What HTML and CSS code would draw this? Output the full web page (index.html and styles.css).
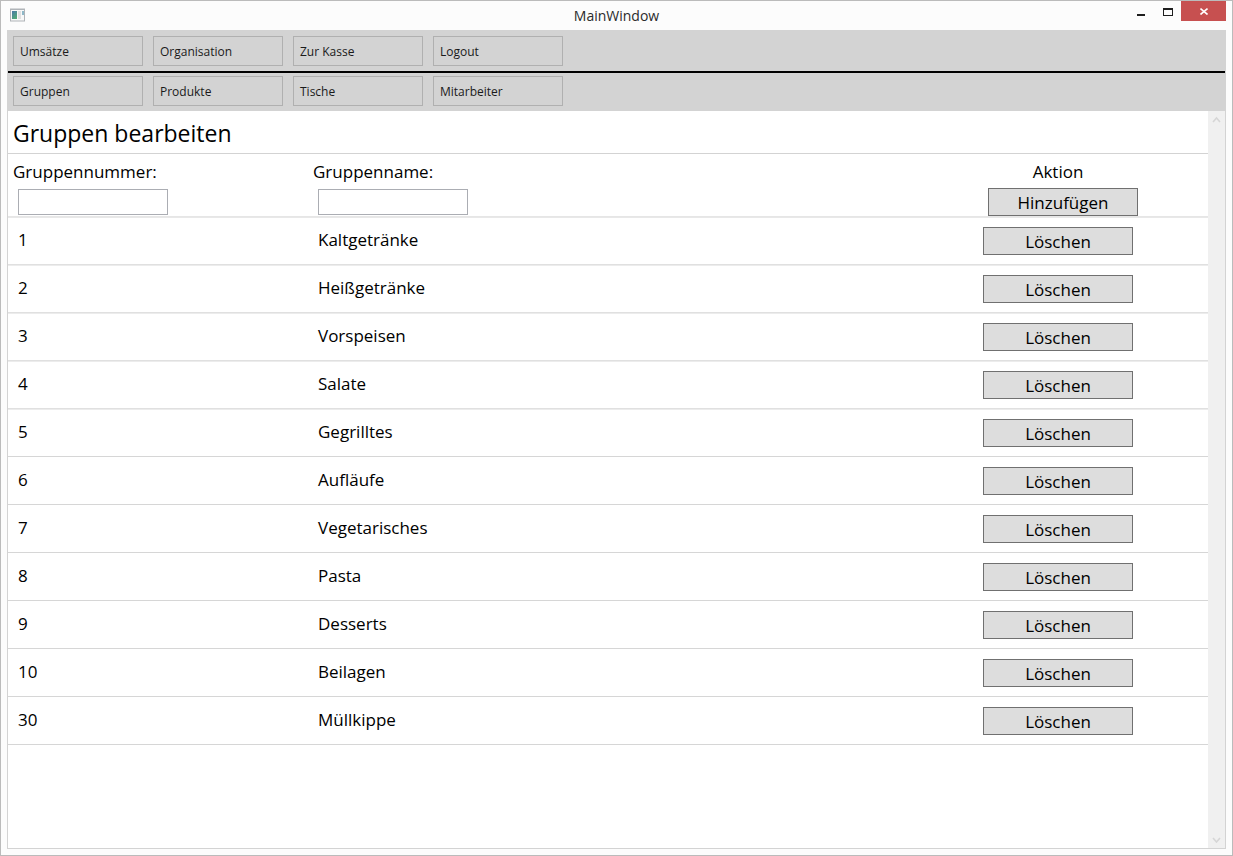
FILE: index.html
```
<!DOCTYPE html>
<html lang="de">
<head>
<meta charset="utf-8">
<title>MainWindow</title>
<link rel="stylesheet" href="styles.css">
</head>
<body>
<div class="window">
    <header class="titlebar">
        <svg class="app-icon" width="16" height="14" viewBox="0 0 16 14">
            <defs>
                <linearGradient id="pane" x1="0" y1="0" x2="0.6" y2="1">
                    <stop offset="0" stop-color="#4a78a8"/>
                    <stop offset="1" stop-color="#52a878"/>
                </linearGradient>
            </defs>
            <rect x="0.5" y="1" width="14" height="12" fill="#f8f8f8" stroke="#b0b4b8"/>
            <path d="M0 1.5h15" stroke="#b0b4b8"/>
            <rect x="2" y="3" width="5" height="8" fill="url(#pane)"/>
            <rect x="8" y="3" width="3" height="8" fill="#e0e0e0"/>
            <rect x="12" y="3" width="2" height="4" fill="#8fb8c8"/>
        </svg>
        <h1 class="title">MainWindow</h1>
        <div class="controls">
            <button type="button" class="control" aria-label="Minimieren"><svg width="10" height="10" viewBox="0 0 10 10"><path d="M1 9h8" stroke="#1e1e1e" stroke-width="2"/></svg></button>
            <button type="button" class="control" aria-label="Maximieren"><svg width="10" height="10" viewBox="0 0 10 10"><path d="M0.5 2v8M9.5 2v8M0 9.5h10" fill="none" stroke="#1e1e1e"/><path d="M0 3h10" stroke="#1e1e1e" stroke-width="2"/></svg></button>
            <button type="button" class="control close" aria-label="Schließen"><svg width="8" height="8" viewBox="0 0 8 8"><path d="M0.5 1.5l7 6M7.5 1.5l-7 6" stroke="#fff" stroke-width="1.6"/></svg></button>
        </div>
    </header>
    <div class="client">
        <nav class="menu">
            <button type="button">Umsätze</button>
            <button type="button">Organisation</button>
            <button type="button">Zur Kasse</button>
            <button type="button">Logout</button>
        </nav>
        <nav class="menu submenu">
            <button type="button">Gruppen</button>
            <button type="button">Produkte</button>
            <button type="button">Tische</button>
            <button type="button">Mitarbeiter</button>
        </nav>
        <div class="view">
            <main class="content">
                <h2>Gruppen bearbeiten</h2>
                <table class="groups">
                    <thead>
                        <tr>
                            <th class="number"><label for="nummer">Gruppennummer:</label><input type="text" id="nummer"></th>
                            <th><label for="name">Gruppenname:</label><input type="text" id="name"></th>
                            <th class="action"><span class="caption">Aktion</span><button type="button" class="add">Hinzufügen</button></th>
                        </tr>
                    </thead>
                    <tbody>
                        <tr><td>1</td><td>Kaltgetränke</td><td class="action"><button type="button">Löschen</button></td></tr>
                        <tr><td>2</td><td>Heißgetränke</td><td class="action"><button type="button">Löschen</button></td></tr>
                        <tr><td>3</td><td>Vorspeisen</td><td class="action"><button type="button">Löschen</button></td></tr>
                        <tr><td>4</td><td>Salate</td><td class="action"><button type="button">Löschen</button></td></tr>
                        <tr><td>5</td><td>Gegrilltes</td><td class="action"><button type="button">Löschen</button></td></tr>
                        <tr><td>6</td><td>Aufläufe</td><td class="action"><button type="button">Löschen</button></td></tr>
                        <tr><td>7</td><td>Vegetarisches</td><td class="action"><button type="button">Löschen</button></td></tr>
                        <tr><td>8</td><td>Pasta</td><td class="action"><button type="button">Löschen</button></td></tr>
                        <tr><td>9</td><td>Desserts</td><td class="action"><button type="button">Löschen</button></td></tr>
                        <tr><td>10</td><td>Beilagen</td><td class="action"><button type="button">Löschen</button></td></tr>
                        <tr><td>30</td><td>Müllkippe</td><td class="action"><button type="button">Löschen</button></td></tr>
                    </tbody>
                </table>
            </main>
            <div class="scrollbar">
                <svg width="9" height="7" viewBox="0 0 9 7"><path d="M1 6l3.5-4 3.5 4" fill="none" stroke="#d6d6d6" stroke-width="1.6"/></svg>
                <svg width="9" height="7" viewBox="0 0 9 7"><path d="M1 2l3.5 4 3.5-4" fill="none" stroke="#d6d6d6" stroke-width="1.6"/></svg>
            </div>
        </div>
    </div>
</div>
</body>
</html>
```
FILE: styles.css
```
* {
    box-sizing: border-box;
}
body {
    margin: 0;
    font-family: "Open Sans", "Noto Sans", sans-serif;
    font-size: 17px;
    color: #000;
}
h1, h2 {
    margin: 0;
    font-weight: normal;
}
button, input {
    margin: 0;
    padding: 0;
    border-radius: 0;
    font-family: inherit;
    font-size: inherit;
    color: inherit;
}
svg {
    display: block;
}
.window {
    display: flex;
    flex-direction: column;
    min-height: 100vh;
    padding: 0 6px 6px;
    border: 1px solid #bbb;
    background: #fcfcfc;
}

/* title bar */
.titlebar {
    display: grid;
    grid-template-columns: 1fr auto 1fr;
    height: 29px;
}
.app-icon {
    margin: 7px 0 0 3px;
}
.title {
    font-size: 14px;
    line-height: 29px;
    color: #2b2b2b;
}
.controls {
    display: flex;
    justify-content: flex-end;
}
.control {
    display: flex;
    align-items: center;
    justify-content: center;
    width: 27px;
    height: 20px;
    border: 0;
    background: none;
}
.close {
    width: 45px;
    background: #c75050;
}

/* menus */
.client {
    display: flex;
    flex: 1;
    flex-direction: column;
    border: 1px solid #d3d3d3;
    border-top: 0;
}
.menu {
    display: flex;
    gap: 10px;
    padding: 6px 5px 5px;
    border-bottom: 2px solid #000;
    background: #d3d3d3;
}
.menu button {
    width: 130px;
    height: 30px;
    padding-left: 6px;
    border: 1px solid #b0b0b0;
    background: #d3d3d3;
    font-size: 12px;
    text-align: left;
    color: #1a1a1a;
}
.submenu {
    padding-top: 3px;
    border-bottom: 0;
}

/* content */
.view {
    display: flex;
    flex: 1;
    background: #fff;
}
.content {
    flex: 1;
}
.content h2 {
    height: 43px;
    padding-left: 5px;
    border-bottom: 1px solid #d3d3d3;
    font-size: 23px;
    line-height: 45px;
}
.groups {
    width: 100%;
    border-collapse: separate;
    border-spacing: 0;
    table-layout: fixed;
}
.groups th {
    height: 63px;
    padding: 6px 5px 0;
    border-bottom: 1px solid #e6e6e6;
    box-shadow: 0 1px #e8e8e8;
    font-weight: normal;
    text-align: left;
    vertical-align: top;
}
.groups td {
    height: 48px;
    padding: 0 10px 2px;
    border-bottom: 1px solid #d6d6d6;
}
.groups tr:nth-child(-n+4) td {
    border-bottom-color: #e0e0e0;
    box-shadow: 0 1px #ececec;
}
.groups .number,
.groups .action {
    width: 300px;
}
.groups .action {
    text-align: center;
}
.groups td.action {
    padding: 1px 0 0;
}
label, .caption {
    display: block;
    line-height: 24px;
}
.groups input {
    display: block;
    width: 150px;
    height: 26px;
    margin: 5px 0 0 5px;
    border: 1px solid #abadb3;
    background: #fff;
}
.groups button {
    width: 150px;
    height: 28px;
    padding-top: 2px;
    border: 1px solid #707070;
    background: #ddd;
    line-height: 24px;
    vertical-align: middle;
}
.groups .add {
    margin: 4px 0 0 10px;
    vertical-align: top;
}
.scrollbar {
    display: flex;
    flex-direction: column;
    align-items: center;
    justify-content: space-between;
    width: 17px;
    padding: 5px 0;
    background: #f0f0f0;
}
```
